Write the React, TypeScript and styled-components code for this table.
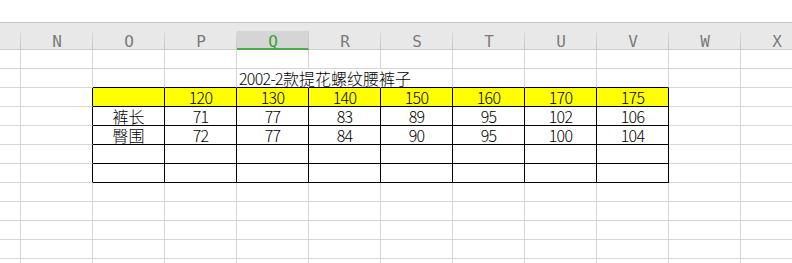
import React from "react";
import styled, { createGlobalStyle } from "styled-components";

const GRID_LINE = "#d6d6d6";
const INK = "#000000";
const COLUMN_TEMPLATE = "21px repeat(11, 72px)";

const GlobalStyle = createGlobalStyle`
  html, body {
    margin: 0;
    padding: 0;
    background: #ffffff;
    overflow: hidden;
  }
`;

const Sheet = styled.div`
  width: 792px;
  height: 263px;
  overflow: hidden;
  padding-top: 22px;
  box-sizing: border-box;
  background: #ffffff;
  font-family: "Noto Sans CJK SC", "Noto Sans", sans-serif;
`;

const ColumnHeader = styled.div`
  display: grid;
  grid-template-columns: ${COLUMN_TEMPLATE};
  height: 28px;
  box-sizing: border-box;
  border-top: 1px solid #c9c9c9;
  border-bottom: 1px solid #cdcdcd;
  background: #e8e8e8;
`;

const HeadCell = styled.div<{ $active?: boolean }>`
  position: relative;
  display: flex;
  align-items: flex-end;
  justify-content: center;
  height: 27px;
  margin-bottom: -1px;
  box-sizing: border-box;
  font-family: "DejaVu Sans Mono", "Liberation Mono", monospace;
  font-size: 16px;
  line-height: 16px;
  color: ${(p) => (p.$active ? "#3e9f3e" : "#7b7b7b")};
  background: ${(p) =>
    p.$active
      ? "linear-gradient(to bottom, transparent 8px, #d5d5d5 8px)"
      : "transparent"};
  box-shadow: ${(p) => (p.$active ? "inset 0 -2px 0 #4caa4c" : "none")};

  &::after {
    content: "";
    position: absolute;
    right: 0;
    top: 9px;
    bottom: 1px;
    width: 1px;
    background: linear-gradient(to bottom, rgba(190, 190, 190, 0.3), #c4c4c4);
  }
`;

const Row = styled.div`
  display: grid;
  grid-template-columns: ${COLUMN_TEMPLATE};
  height: 19px;
`;

type Line = "grid" | "ink" | "hidden";

const lineColor = (l: Line) =>
  l === "ink" ? INK : l === "hidden" ? "transparent" : GRID_LINE;

const Cell = styled.div<{
  $right: Line;
  $bottom: Line;
  $fill?: string;
  $align: "center" | "start";
}>`
  display: flex;
  align-items: center;
  justify-content: ${(p) => (p.$align === "start" ? "flex-start" : "center")};
  height: 19px;
  box-sizing: border-box;
  padding-left: ${(p) => (p.$align === "start" ? "2px" : "0")};
  padding-bottom: 1px;
  border-right: 1px solid ${(p) => lineColor(p.$right)};
  border-bottom: 1px solid ${(p) => lineColor(p.$bottom)};
  background: ${(p) => p.$fill ?? "transparent"};
  color: #000;
  font-size: 16px;
  font-weight: 300;
  line-height: 16px;
  white-space: nowrap;
  overflow: visible;
`;

const Figure = styled.span`
  letter-spacing: -0.7px;
`;

const COLUMN_LETTERS = ["", "N", "O", "P", "Q", "R", "S", "T", "U", "V", "W", "X"];
const ACTIVE_COLUMN = 4;

const SIZES = ["120", "130", "140", "150", "160", "170", "175"];
const MEASURES: [string, string[]][] = [
  ["裤长", ["71", "77", "83", "89", "95", "102", "106"]],
  ["臀围", ["72", "77", "84", "90", "95", "100", "104"]],
];

// bordered block: rows 2..6 (0-based), columns O..V (2..9)
const TABLE_TOP = 2;
const TABLE_BOTTOM = 6;
const TABLE_LEFT = 2;
const TABLE_RIGHT = 9;
const TITLE_ROW = 1;
const TITLE_COL = 4;
const ROW_COUNT = 12;

function cellContent(r: number, c: number): { text?: React.ReactNode; align: "center" | "start" } {
  if (r === TITLE_ROW && c === TITLE_COL) {
    return {
      align: "start",
      text: (
        <>
          <Figure>2002-2</Figure>款提花螺纹腰裤子
        </>
      ),
    };
  }
  if (r === TABLE_TOP && c >= 3 && c <= TABLE_RIGHT) {
    return { align: "center", text: <Figure>{SIZES[c - 3]}</Figure> };
  }
  const m = MEASURES[r - TABLE_TOP - 1];
  if (m) {
    if (c === TABLE_LEFT) return { align: "center", text: m[0] };
    if (c >= 3 && c <= TABLE_RIGHT) return { align: "center", text: <Figure>{m[1][c - 3]}</Figure> };
  }
  return { align: "center" };
}

function rightLine(r: number, c: number): Line {
  // the title runs across Q and R, so their gridlines are not drawn on that row
  if (r === TITLE_ROW && (c === 4 || c === 5)) return "hidden";
  if (r >= TABLE_TOP && r <= TABLE_BOTTOM && c >= TABLE_LEFT - 1 && c <= TABLE_RIGHT) return "ink";
  return "grid";
}

function bottomLine(r: number, c: number): Line {
  if (r >= TABLE_TOP - 1 && r <= TABLE_BOTTOM && c >= TABLE_LEFT && c <= TABLE_RIGHT) return "ink";
  return "grid";
}

export default function App() {
  return (
    <>
      <GlobalStyle />
      <Sheet>
        <ColumnHeader>
          {COLUMN_LETTERS.map((l, i) => (
            <HeadCell key={i} $active={i === ACTIVE_COLUMN}>
              {l}
            </HeadCell>
          ))}
        </ColumnHeader>
        {Array.from({ length: ROW_COUNT }, (_, r) => (
          <Row key={r}>
            {COLUMN_LETTERS.map((_, c) => {
              const { text, align } = cellContent(r, c);
              return (
                <Cell
                  key={c}
                  $right={rightLine(r, c)}
                  $bottom={bottomLine(r, c)}
                  $fill={r === TABLE_TOP && c >= TABLE_LEFT && c <= TABLE_RIGHT ? "#ffff00" : undefined}
                  $align={align}
                >
                  {text}
                </Cell>
              );
            })}
          </Row>
        ))}
      </Sheet>
    </>
  );
}
